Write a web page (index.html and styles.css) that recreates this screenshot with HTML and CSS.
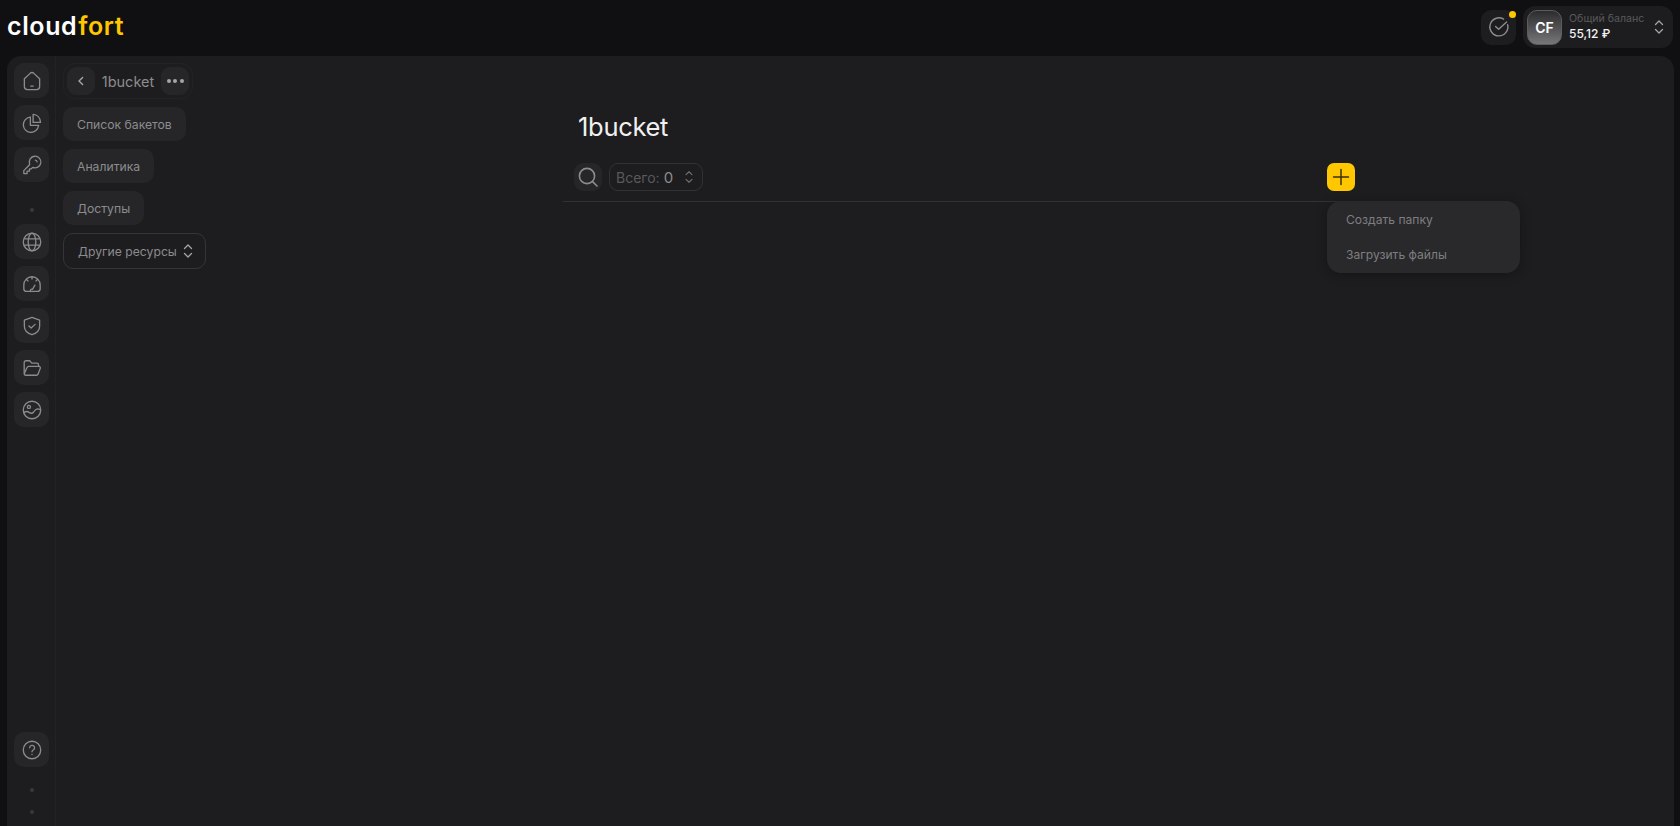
FILE: index.html
```html
<!DOCTYPE html>
<html lang="ru">
<head>
  <meta charset="utf-8">
  <title>cloudfort</title>
  <link rel="stylesheet" href="styles.css">
</head>
<body>
  <header class="topbar">
    <div class="logo">cloud<span class="logo-accent">fort</span></div>
    <div class="topbar-right">
      <div class="task-btn">
        <svg width="22" height="22" viewBox="0 0 22 22" fill="none" stroke="#8c8c8e" stroke-width="1.4" stroke-linecap="round" stroke-linejoin="round">
          <path d="M19.6 8.6A9 9 0 1 1 15.6 3.2"/>
          <path d="M7.6 10.4l3 2.8 8-7.2"/>
        </svg>
        <span class="task-dot"></span>
      </div>
      <div class="balance">
        <div class="avatar">CF</div>
        <div class="balance-text">
          <div class="balance-label">Общий баланс</div>
          <div class="balance-value">55,12 ₽</div>
        </div>
        <svg class="updown" width="10" height="16" viewBox="0 0 10 16" fill="none" stroke="#a5a5a7" stroke-width="1.3" stroke-linecap="round" stroke-linejoin="round">
          <path d="M1.5 5.5L5 2l3.5 3.5"/>
          <path d="M1.5 10.5L5 14l3.5-3.5"/>
        </svg>
      </div>
    </div>
  </header>

  <div class="shell">
    <nav class="rail">
      <a class="rail-btn">
        <svg viewBox="0 0 20 22" fill="none" stroke="#8c8c8e" stroke-linecap="round" stroke-linejoin="round">
          <path d="M1.6 8.6L8 2.6a3 3 0 0 1 4 0l6.4 6V17a3.4 3.4 0 0 1-3.4 3.4H5A3.4 3.4 0 0 1 1.6 17z"/>
          <path d="M8.6 16.6h2.8"/>
        </svg>
      </a>
      <a class="rail-btn">
        <svg viewBox="0 0 22 22" fill="none" stroke="#8c8c8e" stroke-linecap="round" stroke-linejoin="round">
          <path d="M8.8 4.6a8.4 8.4 0 1 0 9.4 9.4"/>
          <path d="M9.2 4.6V13.6H18.4"/>
          <path d="M12.2 1.6c4.4.2 7.9 3.6 8.2 8.8h-8.2z"/>
        </svg>
      </a>
      <a class="rail-btn">
        <svg viewBox="0 0 22 22" fill="none" stroke="#8c8c8e" stroke-linecap="round" stroke-linejoin="round">
          <path d="M8.3 10.8L2 17.2v3.2h3.6v-2.6h2.6v-2.6h2l1.6-1.6a6.4 6.4 0 1 0-3.5-3.8z"/>
          <path d="M14.6 5.6a2.2 2.2 0 0 1 2 2"/>
        </svg>
      </a>
      <span class="rail-dot"></span>
      <a class="rail-btn">
        <svg viewBox="0 0 22 22" fill="none" stroke="#8c8c8e">
          <circle cx="11" cy="11" r="9.6"/>
          <ellipse cx="11" cy="11" rx="4.2" ry="9.6"/>
          <path d="M2.4 7.6h17.2M2.4 14.4h17.2"/>
        </svg>
      </a>
      <a class="rail-btn">
        <svg viewBox="0 0 22 22" fill="none" stroke="#8c8c8e" stroke-linecap="round" stroke-linejoin="round">
          <path d="M5 19.2H17A3 3 0 0 0 20 16.4V12a9 9 0 0 0-18 0v4.4a3 3 0 0 0 3 2.8z"/>
          <path d="M9.4 19.2c-.8-1.6.6-3 2.2-2.4l2.6-4.6"/>
          <path d="M11 3v2.4M5 6l1.6 1.6M17 6l-1.6 1.6"/>
        </svg>
      </a>
      <a class="rail-btn">
        <svg viewBox="0 0 22 22" fill="none" stroke="#8c8c8e" stroke-linecap="round" stroke-linejoin="round">
          <path d="M11 1.6l8.4 3v6.6c0 4.6-3.6 7.8-8.4 9.4-4.8-1.6-8.4-4.8-8.4-9.4V4.6z"/>
          <path d="M7.6 11l2.4 2.2 4.4-4"/>
        </svg>
      </a>
      <a class="rail-btn">
        <svg viewBox="0 0 22 22" fill="none" stroke="#8c8c8e" stroke-linecap="round" stroke-linejoin="round">
          <path d="M2.4 16.6V5a2 2 0 0 1 2-2h4l2.4 2.6h5.4a2 2 0 0 1 2 2v1.6"/>
          <path d="M2.4 17.6a1.8 1.8 0 0 0 1.8 1.4h11.6a2 2 0 0 0 1.9-1.3l2.4-6.3a1.6 1.6 0 0 0-1.5-2.2H7.4a2 2 0 0 0-1.9 1.3z"/>
        </svg>
      </a>
      <a class="rail-btn">
        <svg viewBox="0 0 22 22" fill="none" stroke="#8c8c8e" stroke-linecap="round" stroke-linejoin="round">
          <circle cx="11" cy="11" r="9.6"/>
          <circle cx="7.6" cy="7.6" r="1.7"/>
          <path d="M2.4 13.6c2-1.4 3.8-1.2 5.4 0 2 1.4 3.6 1.4 5-.4 1.2-1.8 2.4-3.2 4.2-3.4 1 0 1.9.2 3.2.8"/>
        </svg>
      </a>
      <div class="rail-bottom">
        <a class="rail-btn">
          <svg viewBox="0 0 22 22" fill="none" stroke="#8c8c8e" stroke-linecap="round" stroke-linejoin="round">
            <circle cx="11" cy="11" r="9.6"/>
            <path d="M8.4 8.6a2.7 2.7 0 1 1 4 2.4c-.9.5-1.4 1-1.4 2"/>
            <path d="M11 15.8v.2"/>
          </svg>
        </a>
        <span class="rail-dot rail-dot-first"></span>
        <span class="rail-dot rail-dot-last"></span>
      </div>
    </nav>

    <aside class="subnav">
      <div class="crumb">
        <a class="crumb-btn">
          <svg width="10" height="12" viewBox="0 0 10 12" fill="none" stroke="#a5a5a7" stroke-width="1.4" stroke-linecap="round" stroke-linejoin="round">
            <path d="M6.6 2.4L3 6l3.6 3.6"/>
          </svg>
        </a>
        <span class="crumb-title">1bucket</span>
        <a class="crumb-btn crumb-more"><i></i><i></i><i></i></a>
      </div>
      <a class="side-item">Список бакетов</a>
      <a class="side-item">Аналитика</a>
      <a class="side-item">Доступы</a>
      <a class="side-item side-select">
        Другие ресурсы
        <svg width="10" height="16" viewBox="0 0 10 16" fill="none" stroke="#a5a5a7" stroke-width="1.3" stroke-linecap="round" stroke-linejoin="round">
          <path d="M1.5 5.5L5 2l3.5 3.5"/>
          <path d="M1.5 10.5L5 14l3.5-3.5"/>
        </svg>
      </a>
    </aside>

    <main class="content">
      <h1 class="page-title">1bucket</h1>
      <div class="toolbar">
        <a class="search-btn">
          <svg width="22" height="22" viewBox="0 0 22 22" fill="none" stroke="#8c8c8e" stroke-width="1.6" stroke-linecap="round">
            <circle cx="10" cy="10" r="7.6"/>
            <path d="M15.6 15.6l4.4 4.4"/>
          </svg>
        </a>
        <div class="total">
          <span class="total-label">Всего:</span>
          <span class="total-value">0</span>
          <svg width="10" height="14" viewBox="0 0 10 14" fill="none" stroke="#6e6e70" stroke-width="1.2" stroke-linecap="round" stroke-linejoin="round">
            <path d="M2 4.6L5 1.8l3 2.8"/>
            <path d="M2 9.4l3 2.8 3-2.8"/>
          </svg>
        </div>
        <div class="add-wrap">
          <a class="add-btn">
            <svg width="20" height="20" viewBox="0 0 20 20" fill="none" stroke="#3a3000" stroke-width="1.5" stroke-linecap="round">
              <path d="M10 2.5v15M2.5 10h15"/>
            </svg>
          </a>
          <div class="add-menu">
            <a class="add-menu-item">Создать папку</a>
            <a class="add-menu-item">Загрузить файлы</a>
          </div>
        </div>
      </div>
    </main>
  </div>
</body>
</html>
```

FILE: styles.css
```css
* {
  box-sizing: border-box;
}
html,
body {
  height: 100%;
}
body {
  margin: 0;
  background: #101012;
  color: #8c8c8e;
  font-family: Inter, "Noto Sans", sans-serif;
  font-size: 13px;
  display: flex;
  flex-direction: column;
  overflow: hidden;
}

/* top bar */
.topbar {
  height: 56px;
  flex: none;
  display: flex;
  align-items: center;
  justify-content: space-between;
  padding: 0 7px 2px 7px;
}
.logo {
  font-weight: 600;
  font-size: 25px;
  line-height: 30px;
  margin-bottom: 3px;
  letter-spacing: 0.6px;
  color: #fff;
}
.logo-accent {
  color: #ffc700;
  margin-left: 1px;
}
.topbar-right {
  display: flex;
  align-items: center;
  gap: 7px;
}
.task-btn {
  width: 35px;
  height: 35px;
  border-radius: 10px;
  background: #1d1d1f;
  display: flex;
  align-items: center;
  justify-content: center;
  position: relative;
}
.task-dot {
  position: absolute;
  top: 1px;
  right: 0;
  width: 7px;
  height: 7px;
  border-radius: 50%;
  background: #ffc700;
}
.balance {
  width: 150px;
  height: 42px;
  border-radius: 12px;
  background: #1d1d1f;
  display: flex;
  align-items: center;
  padding: 0 9px 0 4px;
}
.avatar {
  width: 35px;
  height: 35px;
  border-radius: 10px;
  border: 1px solid #5c5c5e;
  background: linear-gradient(180deg, #2c2c2e 0%, #777779 100%);
  color: #fff;
  font-weight: 600;
  font-size: 14px;
  display: flex;
  align-items: center;
  justify-content: center;
}
.balance-text {
  margin-left: 7px;
  flex: 1;
}
.balance-label {
  font-size: 10.6px;
  line-height: 14px;
  color: #59595b;
}
.balance-value {
  font-size: 12px;
  font-weight: 500;
  line-height: 16px;
  color: #f2f2f2;
}

/* main panel */
.shell {
  flex: 1;
  margin: 0 6px 0 7px;
  background: #1d1d1f;
  border-radius: 14px 14px 0 0;
  display: flex;
  min-height: 0;
}
.rail {
  width: 49px;
  flex: none;
  border-right: 1px solid #232325;
  padding: 7px 0 0 7px;
  display: flex;
  flex-direction: column;
  gap: 7px;
}
.rail-btn {
  width: 35px;
  height: 35px;
  border-radius: 10px;
  background: #262628;
  display: flex;
  align-items: center;
  justify-content: center;
}
.rail-btn svg {
  width: 20px;
  height: 20px;
  stroke-width: 1.45;
}
.rail-dot {
  width: 4px;
  height: 4px;
  border-radius: 50%;
  background: #3a3a3c;
  margin: 19px 0 5px 16px;
}
.rail-bottom {
  margin-top: auto;
  padding-bottom: 12px;
  display: flex;
  flex-direction: column;
}
.rail-bottom .rail-dot {
  margin: 0 0 0 16px;
}
.rail-bottom .rail-dot-first {
  margin-top: 21px;
}
.rail-bottom .rail-dot-last {
  margin-top: 18px;
}

/* second column */
.subnav {
  width: 507px;
  flex: none;
  padding: 7px 0 0 7px;
  display: flex;
  flex-direction: column;
  align-items: flex-start;
  gap: 8px;
}
.crumb {
  height: 36px;
  width: 130px;
  border: 1px solid #232325;
  border-radius: 12px;
  display: flex;
  align-items: center;
  padding: 0 3px;
}
.crumb-btn {
  width: 28px;
  height: 28px;
  flex: none;
  border-radius: 9px;
  background: #262628;
  display: flex;
  align-items: center;
  justify-content: center;
}
.crumb-title {
  flex: 1;
  text-align: center;
  font-size: 14.5px;
  color: #8c8c8e;
}
.crumb-more {
  gap: 2.5px;
}
.crumb-more i {
  width: 4px;
  height: 4px;
  border-radius: 50%;
  background: #a5a5a7;
}
.side-item {
  height: 34px;
  padding: 0 14px;
  border-radius: 10px;
  background: #262628;
  display: flex;
  align-items: center;
  font-size: 12.2px;
  color: #8c8c8e;
}
.side-select {
  height: 36px;
  gap: 6px;
  padding: 0 12px 0 14px;
  background: none;
  border: 1px solid #353537;
}

/* content */
.content {
  width: 792px;
  flex: none;
}
.page-title {
  margin: 55px 0 0 15px;
  height: 31px;
  font-size: 25.5px;
  line-height: 31px;
  font-weight: 400;
  letter-spacing: -0.3px;
  color: #f0f0f0;
}
.toolbar {
  margin-top: 21px;
  height: 39px;
  padding: 0 0 10px 11px;
  border-bottom: 1px solid #323234;
  display: flex;
  align-items: flex-start;
  gap: 7px;
}
.search-btn {
  width: 28px;
  height: 28px;
  border-radius: 9px;
  background: #262628;
  display: flex;
  align-items: center;
  justify-content: center;
}
.total {
  width: 94px;
  height: 28px;
  border: 1px solid #323234;
  border-radius: 9px;
  display: flex;
  align-items: center;
  gap: 4px;
  padding: 0 8px 0 6px;
  font-size: 14px;
}
.total-label {
  color: #59595b;
}
.total-value {
  color: #8c8c8e;
  font-size: 15px;
  flex: 1;
}
.add-wrap {
  margin-left: auto;
  position: relative;
}
.add-btn {
  width: 28px;
  height: 28px;
  border-radius: 7px;
  background: #ffc700;
  display: flex;
  align-items: center;
  justify-content: center;
}
.add-menu {
  position: absolute;
  top: 38px;
  left: 0;
  width: 193px;
  height: 72px;
  padding: 1px 0;
  border-radius: 14px;
  background: #29292b;
  box-shadow: 0 2px 12px rgba(0, 0, 0, 0.3);
  display: flex;
  flex-direction: column;
  justify-content: center;
}
.add-menu-item {
  height: 35px;
  padding-left: 19px;
  display: flex;
  align-items: center;
  font-size: 12.1px;
  color: #7e7e80;
}
```
